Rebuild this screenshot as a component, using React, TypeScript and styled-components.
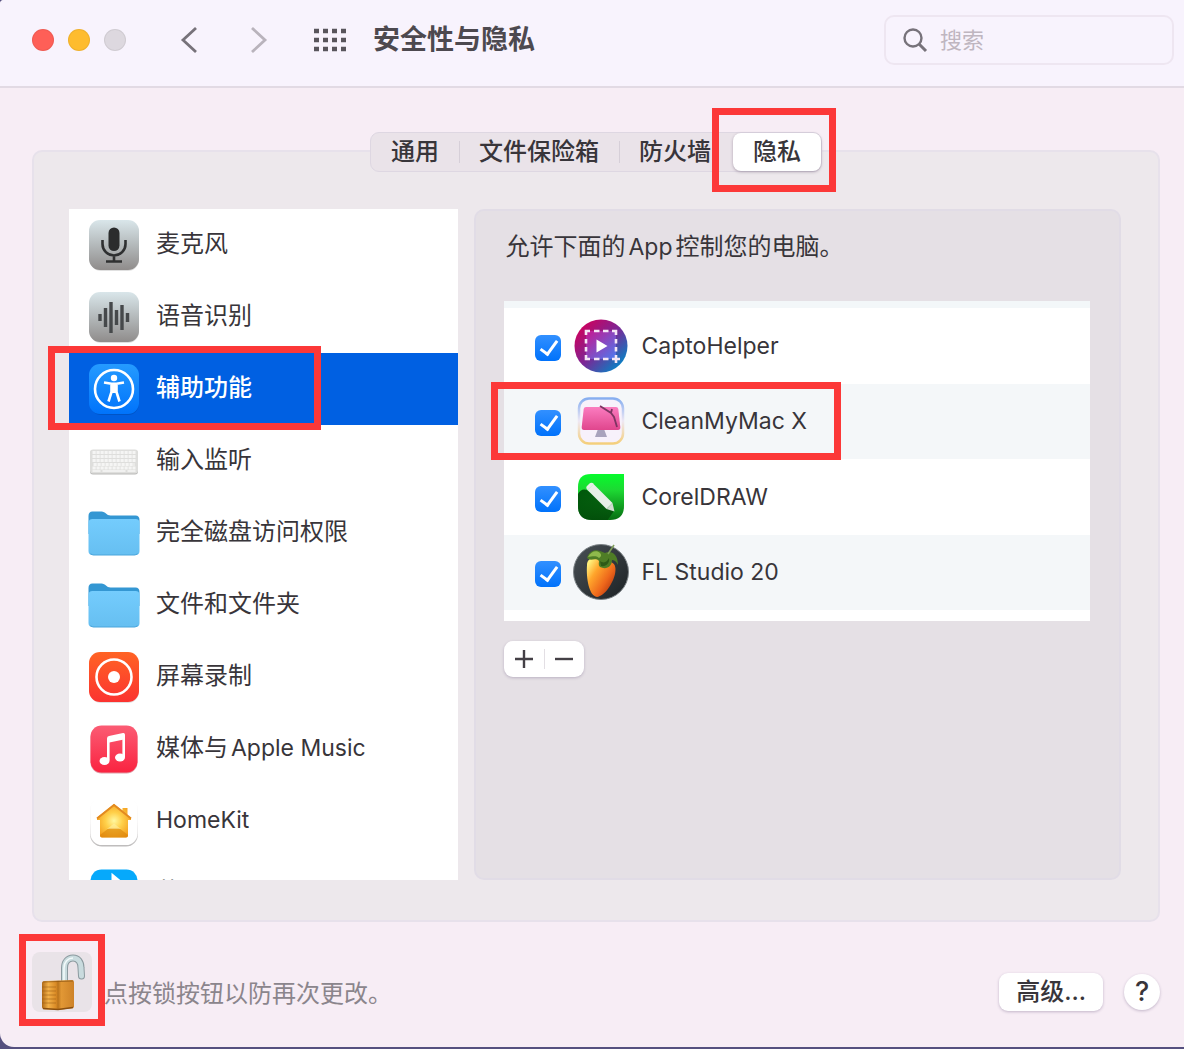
import React, { useState } from 'react';
import type { ReactNode } from 'react';
import styled, { createGlobalStyle, css } from 'styled-components';

const Global = createGlobalStyle`
  *, *::before, *::after { box-sizing: border-box; }
  html { background: #55507f; }
  body {
    margin: 0;
    color: #38353a;
    font: 24px/36px Inter, "Noto Sans CJK SC", sans-serif;
  }
  button, input { font: inherit; color: inherit; margin: 0; }
  button { border: 0; padding: 0; background: none; cursor: pointer; }
  svg { display: block; }
`;

const Window = styled.div`
  display: flex;
  flex-direction: column;
  min-height: calc(100vh - 2px);
  background: #f7edf5;
  border-radius: 4px 0 0 14px;
  overflow: hidden;
`;

const TitleBar = styled.header`
  display: flex;
  align-items: center;
  height: 88px;
  padding: 0 10px 6px 32px;
  background: #f8f3fd;
  border-bottom: 2px solid #e2dae4;
`;

const Lights = styled.div`
  display: flex;
  gap: 14px;
`;

const Light = styled.button<{ $color: string }>`
  width: 22px;
  height: 22px;
  border-radius: 50%;
  background: ${p => p.$color};
  box-shadow: inset 0 0 0 1px rgba(0, 0, 0, 0.06);
`;

const NavButtons = styled.nav`
  display: flex;
  gap: 44px;
  margin: 0 44px 0 52px;
`;

const Title = styled.h1`
  flex: 1;
  margin: 0 0 0 25px;
  font-size: 27px;
  line-height: 36px;
  font-weight: 700;
  color: #4d494f;
`;

const SearchBox = styled.label`
  display: flex;
  align-items: center;
  gap: 12px;
  width: 290px;
  height: 50px;
  padding: 0 16px;
  border: 2px solid #eee6f1;
  border-radius: 10px;
`;

const SearchInput = styled.input`
  flex: 1;
  min-width: 0;
  padding: 0;
  border: 0;
  outline: 0;
  background: none;
  font-size: 22px;
  &::placeholder { color: #bfb6c0; opacity: 1; }
`;

const Main = styled.main`
  display: flex;
  flex-direction: column;
  flex: 1;
  padding: 44px 24px 0 32px;
`;

const TabBar = styled.div`
  position: relative;
  display: flex;
  align-self: center;
  margin-bottom: -22px;
  border: 1px solid #ded7e2;
  border-radius: 9px;
  background: #eae3e9;
`;

const Tab = styled.button<{ $active: boolean }>`
  position: relative;
  height: 38px;
  padding: 0 20px;
  border-radius: 8px;
  font-weight: 500;
  & + &::before {
    content: "";
    position: absolute;
    left: 0;
    top: 8px;
    height: 22px;
    border-left: 1px solid #d6cfd8;
  }
  ${p => p.$active && css`
    background: #fff;
    box-shadow: 0 1px 3px rgba(60, 40, 70, 0.35);
    && { margin-left: 2px; }
    &&::before { display: none; }
  `}
`;

const Panel = styled.section`
  display: grid;
  grid-template-columns: 3fr 5fr;
  gap: 16px;
  padding: 57px 37px 40px 35px;
  border: 2px solid #e7e1eb;
  border-radius: 10px;
  background: #ede8ec;
`;

const Categories = styled.ul`
  height: 671px;
  margin: 0;
  padding: 0;
  list-style: none;
  background: #fff;
  overflow-y: clip;
`;

const Category = styled.li`
  position: relative;
`;

const CategoryButton = styled.button<{ $active: boolean }>`
  display: flex;
  align-items: center;
  gap: 16px;
  width: 100%;
  height: 72px;
  padding: 0 19px;
  text-align: left;
  background: ${p => (p.$active ? '#0060e2' : 'transparent')};
  color: ${p => (p.$active ? '#fff' : 'inherit')};
  font-weight: ${p => (p.$active ? 500 : 400)};
`;

const Label = styled.span`
  white-space: nowrap;
  padding-bottom: 2px;
`;

const Latin = styled.span`
  font-size: 23px;
`;

const InlineLatin = styled(Latin)`
  margin: 0 3px;
`;

const Detail = styled.div`
  padding: 18px 29px 0 28px;
  border: 2px solid #e1dce6;
  border-radius: 10px;
  background: #e5e0e5;
`;

const DetailHeading = styled.p`
  margin: 0 0 36px 2px;
`;

const Apps = styled.ul`
  display: grid;
  grid-auto-rows: 1fr;
  height: 320px;
  margin: 0;
  padding: 7px 0 11px;
  list-style: none;
  background: linear-gradient(#f3f7f9 7px, #fff 7px);
`;

const AppRow = styled.li`
  position: relative;
  &:nth-child(even) { background: #f4f7f9; }
`;

const AppLabel = styled.label`
  display: flex;
  align-items: center;
  height: 100%;
  padding-left: 31px;
  font-size: 23px;
`;

const AppIcon = styled.span`
  margin: 0 13px 0 12px;
`;

const CheckBox = styled.input`
  appearance: none;
  width: 26px;
  height: 26px;
  margin-top: 4px;
  border-radius: 6px;
  background: #d5d0d6;
  &:checked { background: linear-gradient(#3290ff, #0072fb); }
  &:checked::before {
    content: "";
    display: block;
    width: 10px;
    height: 18px;
    margin: 2px 0 0 9px;
    border: solid #fff;
    border-width: 0 3px 3px 0;
    transform: rotate(36deg);
  }
`;

const Stepper = styled.div`
  display: inline-flex;
  align-items: center;
  margin-top: 20px;
  border-radius: 9px;
  background: #fff;
  box-shadow: 0 1px 3px rgba(60, 40, 90, 0.25);
`;

const StepButton = styled.button`
  position: relative;
  display: grid;
  place-items: center;
  width: 40px;
  height: 36px;
  & + &::before {
    content: "";
    position: absolute;
    left: 0;
    top: 8px;
    height: 20px;
    border-left: 1px solid #e3dfe4;
  }
`;

const Footer = styled.footer`
  display: flex;
  align-items: center;
  gap: 12px;
  padding-top: 30px;
`;

const LockWrap = styled.div`
  position: relative;
`;

const LockButton = styled.button`
  display: block;
  width: 60px;
  height: 60px;
  border-radius: 8px;
  background: #e9e3e8;
`;

const Hint = styled.p`
  flex: 1;
  margin: 24px 0 0;
  color: #8b858c;
`;

const PushButton = styled.button`
  height: 38px;
  margin-top: 20px;
  padding: 0 17px;
  border-radius: 9px;
  background: #fff;
  box-shadow: 0 1px 3px rgba(60, 40, 90, 0.28);
  font-weight: 500;
`;

const HelpButton = styled(PushButton)`
  width: 36px;
  height: 36px;
  margin-left: 9px;
  padding: 0;
  border-radius: 50%;
  font-size: 27px;
`;

const Highlight = styled.span<{ $top: number; $left: number; $w: number; $h: number }>`
  position: absolute;
  z-index: 2;
  top: ${p => p.$top}px;
  left: ${p => p.$left}px;
  width: ${p => p.$w}px;
  height: ${p => p.$h}px;
  border: 7px solid #fc3838;
  pointer-events: none;
`;

function Tile({ id, from, to, children }: { id: string; from: string; to: string; children?: ReactNode }) {
  return (
    <svg width="52" height="52" viewBox="0 0 52 52" aria-hidden="true">
      <defs>
        <linearGradient id={id} x2="0" y2="1">
          <stop stopColor={from} />
          <stop offset="1" stopColor={to} />
        </linearGradient>
      </defs>
      <rect x="2" y="2.500" width="49" height="49.500" rx="11" fill="#000" opacity=".12" />
      <rect x="1" y="1" width="50" height="50" rx="11" fill={`url(#${id})`} />
      {children}
    </svg>
  );
}

const MicIcon = () => (
  <Tile id="mic" from="#d9e6ea" to="#8f8c8b">
    <rect x="20.500" y="8.500" width="11" height="23.500" rx="5.500" fill="#2b2c2d" />
    <path d="M14.500 21v4a11.500 11.500 0 0 0 23 0v-4M26 36.500V42M18 42.500h16" fill="none" stroke="#2f3031" strokeWidth="2.600" />
  </Tile>
);

const SpeechIcon = () => (
  <Tile id="speech" from="#d9e6ea" to="#8f8c8b">
    <path d="M12 23v7M17.500 17v19M23 11v31M28.500 19v15M34 14v25M39.500 22v9" fill="none" stroke="#46494b" strokeWidth="3.400" />
  </Tile>
);

const AccessIcon = () => (
  <Tile id="access" from="#259bff" to="#0073fb">
    <circle cx="26" cy="26" r="19" fill="none" stroke="#fff" strokeWidth="2.600" />
    <circle cx="26" cy="15" r="3.200" fill="#fff" />
    <path d="M16 19.500l7.500 1.300h5l7.500-1.300M23.500 21v8l-3 9.500M28.500 21v8l3 9.500" fill="none" stroke="#fff" strokeWidth="2.600" />
    <path d="M23 20h6v10h-6z" fill="#fff" />
  </Tile>
);

const KeyboardIcon = () => (
  <svg width="52" height="52" viewBox="0 0 52 52" aria-hidden="true">
    <rect x="2" y="15.500" width="48" height="24" rx="3" fill="#b9b9b7" />
    <rect x="2" y="14.500" width="48" height="24" rx="3" fill="#dededc" />
    <path d="M4.500 17.500h43M4.500 21.500h43M4.500 25.500h43M5.500 29.500h41M4.500 33h43" fill="none" stroke="#f5f5f4" strokeWidth="3" strokeDasharray="3.200 .8" />
    <path d="M4.500 36h8M14.500 36h23M39.500 36h8" stroke="#f1f1f0" strokeWidth="1.800" />
  </svg>
);

const FolderIcon = ({ id }: { id: string }) => (
  <svg width="52" height="52" viewBox="0 0 52 52" aria-hidden="true">
    <defs>
      <linearGradient id={id} x2="0" y2="1">
        <stop stopColor="#74ccfd" />
        <stop offset="1" stopColor="#66bff1" />
      </linearGradient>
    </defs>
    <path d="M.5 9q0-4.500 4-4.500h9c4 0 5 4 9 4h25q4 0 4 4.500v14H.500z" fill="#3497d3" />
    <rect x=".5" y="12" width="51" height="36" rx="4" fill={`url(#${id})`} />
    <path d="M2.500 46.500q1 1.500 3 1.500h41q2 0 3-1.500" fill="none" stroke="#4ba5db" strokeWidth="1.200" />
  </svg>
);

const RecordIcon = () => (
  <Tile id="record" from="#ff6324" to="#fb3330">
    <circle cx="26" cy="26" r="17.500" fill="none" stroke="#fff" strokeWidth="2.600" />
    <circle cx="26" cy="26" r="6" fill="#fff" />
  </Tile>
);

const MusicIcon = () => (
  <svg width="52" height="52" viewBox="0 0 52 52" aria-hidden="true">
    <defs>
      <linearGradient id="music" x2="0" y2="1">
        <stop stopColor="#fb5c74" />
        <stop offset="1" stopColor="#fa2340" />
      </linearGradient>
    </defs>
    <rect x="2.500" y="3.500" width="47" height="47" rx="11" fill="#c03a4c" opacity=".5" />
    <rect x="2.500" y="2.500" width="47" height="47" rx="11" fill="url(#music)" />
    <path d="M19 15.500q0-2 2-2.400l14-3q2-.3 2 1.600v4.500L19 20z" fill="#fff" />
    <path d="M20.300 16v21.500M35.700 12v22" stroke="#fff" strokeWidth="2.600" />
    <ellipse cx="16.500" cy="38" rx="5" ry="4" fill="#fff" />
    <ellipse cx="32" cy="34.500" rx="5" ry="4" fill="#fff" />
  </svg>
);

const HomeIcon = () => (
  <svg width="52" height="52" viewBox="0 0 52 52" aria-hidden="true">
    <defs>
      <radialGradient id="home" cx=".5" cy=".5" r=".62">
        <stop stopColor="#fff8a0" />
        <stop offset=".4" stopColor="#ffd04a" />
        <stop offset="1" stopColor="#f19415" />
      </radialGradient>
      <linearGradient id="home-edge" x2="0" y2="1">
        <stop stopColor="#fff" />
        <stop offset=".5" stopColor="#f0eeee" />
        <stop offset="1" stopColor="#bdbbbb" />
      </linearGradient>
    </defs>
    <rect x="2" y="3" width="48" height="48.500" rx="12" fill="url(#home-edge)" />
    <rect x="2.500" y="2" width="47" height="48" rx="11.500" fill="#fff" />
    <path d="M9 22.500L26 9l8.500 6.500v-2.500h5v7l3.500 3v2h-3v15.500q0 2-2 2H14q-2 0-2-2V25H9z" fill="url(#home)" />
    <path d="M9 23.500L26 10l17 13.500" fill="none" stroke="#e38a20" strokeWidth="2" />
    <path d="M12 40l9-7h10l9 7v.500q0 2-2 2H14q-2 0-2-2z" fill="#d88209" opacity=".6" />
    <path d="M19 34l7-5.500 7 5.500z" fill="#fff6b0" opacity=".5" />
  </svg>
);

const BlueIcon = () => (
  <svg width="52" height="52" viewBox="0 0 52 52" aria-hidden="true">
    <rect x="2.500" y="2.500" width="47" height="47" rx="11" fill="#06a9fb" />
    <path d="M16 19l20 14-11 9V9l11 9-20 14" fill="none" stroke="#fff" strokeWidth="3" />
  </svg>
);

const CaptoIcon = () => (
  <svg width="56" height="56" viewBox="0 0 56 56" aria-hidden="true">
    <defs>
      <linearGradient id="capto" x1=".1" y1=".1" x2=".9" y2=".9">
        <stop stopColor="#d1005c" />
        <stop offset=".5" stopColor="#7b2796" />
        <stop offset="1" stopColor="#0088c8" />
      </linearGradient>
      <linearGradient id="capto-in" x2="1" y2="1">
        <stop stopColor="#c9168f" />
        <stop offset="1" stopColor="#4a7af0" />
      </linearGradient>
    </defs>
    <circle cx="28" cy="28" r="26.500" fill="url(#capto)" />
    <rect x="13" y="13" width="30" height="28" fill="url(#capto-in)" />
    <path d="M13 17v-4h4M39 13h4v4M13 37v4h4M21 13h5.500M30 13h5.500M21 41h5.500M30 41h5.500M13 21v4.500M13 29v4.500M43 21v4.500M43 29v4.500M43 37v8M39 41h8" fill="none" stroke="#f5e6f6" strokeWidth="2.600" />
    <path d="M23.500 21.500L34.500 28l-11 6.500z" fill="#fff" />
  </svg>
);

const CleanIcon = () => (
  <svg width="56" height="56" viewBox="0 0 56 56" aria-hidden="true">
    <defs>
      <linearGradient id="clean-edge" x2="0" y2="1">
        <stop stopColor="#86aef0" />
        <stop offset=".5" stopColor="#eee8f4" />
        <stop offset="1" stopColor="#f4cf7c" />
      </linearGradient>
      <linearGradient id="clean" x2="0" y2="1">
        <stop stopColor="#fb7cc0" />
        <stop offset="1" stopColor="#e0468d" />
      </linearGradient>
    </defs>
    <rect x="6" y="5.500" width="44" height="45" rx="10" fill="#f7f1fb" stroke="url(#clean-edge)" strokeWidth="2.500" />
    <path d="M25 36h6l3 8H22z" fill="#a9a3bd" />
    <path d="M13 14h30q2 0 2.300 2l2 18q.2 3-2.300 3H11q-2.500 0-2.300-3l2-18q.3-2 2.300-2z" fill="url(#clean)" />
    <path d="M27 13l11 7 3 4 3 10M38 20l1-4" fill="none" stroke="#7d3462" strokeWidth="1.800" />
  </svg>
);

const CorelIcon = () => (
  <svg width="56" height="56" viewBox="0 0 56 56" aria-hidden="true">
    <defs>
      <linearGradient id="corel" x2="0" y2="1">
        <stop stopColor="#06fb2c" />
        <stop offset=".35" stopColor="#1dd933" />
        <stop offset="1" stopColor="#076d12" />
      </linearGradient>
      <linearGradient id="corel-shade" x2="1" y2="1">
        <stop stopColor="#00560a" />
        <stop offset="1" stopColor="#003c06" stopOpacity=".6" />
      </linearGradient>
      <clipPath id="corel-clip">
        <path d="M18 5h33v32q0 14-14 14H19Q5 51 5 37V18Q5 5 18 5z" />
      </clipPath>
    </defs>
    <g clipPath="url(#corel-clip)">
      <path d="M5 5h46v46H5z" fill="url(#corel)" />
      <path d="M5 25q3-6 9-4l27 21-7 10H5z" fill="url(#corel-shade)" />
    </g>
    <path d="M17.500 18L36.500 37" stroke="#e6efe6" strokeWidth="8.500" />
    <path d="M14.500 21q-2.500-2.500 0-4.500l2-2q2-1.500 4.500.500z" fill="#e6efe6" />
    <path d="M39.500 34l2 8.500-8-2.500z" fill="#cfdccf" />
  </svg>
);

const FruitIcon = () => (
  <svg width="56" height="56" viewBox="0 0 56 56" aria-hidden="true">
    <defs>
      <linearGradient id="fruit-bg" x1="0" y1="0" x2="1" y2="1">
        <stop stopColor="#495156" />
        <stop offset="1" stopColor="#1c2124" />
      </linearGradient>
      <linearGradient id="fruit" x1=".1" y1=".1" x2=".9" y2=".8">
        <stop stopColor="#fff07a" />
        <stop offset=".3" stopColor="#ffa62c" />
        <stop offset=".7" stopColor="#ee671b" />
        <stop offset="1" stopColor="#b93a10" />
      </linearGradient>
    </defs>
    <circle cx="28" cy="28" r="27.500" fill="url(#fruit-bg)" stroke="#7b8286" strokeWidth="1" />
    <path d="M14 21c0-6 5-8 11-7l13 4c5 2 5 7 4 12-2 9-10 22-18 23-8-1-11-19-10-32z" fill="url(#fruit)" />
    <path d="M14 14c2-7 8-9 13-7l5 2c6-3 13 1 13 12-2-4-4-5-6-5 0 7-6 10-12 7-2-2-1-4-1-6-4-4-8 1-12-3z" fill="#4f7d26" />
    <path d="M15 13c3-6 9-7 12-4 2 2 1 4-1 5-4-3-7-1-11-1z" fill="#8fb94c" />
    <path d="M27 17c4 3 7 1 9-3 1 5-3 9-8 8z" fill="#2f5a17" />
    <path d="M35 10l6-9" stroke="#7e9d5a" strokeWidth="1.600" />
  </svg>
);

const PadlockIcon = () => (
  <svg width="60" height="60" viewBox="0 0 60 60" aria-hidden="true">
    <defs>
      <linearGradient id="lock" x2="1" y2="0">
        <stop stopColor="#b06a17" />
        <stop offset=".2" stopColor="#f3b149" />
        <stop offset=".44" stopColor="#d98a25" />
        <stop offset=".5" stopColor="#b8721b" />
        <stop offset=".6" stopColor="#e29835" />
        <stop offset="1" stopColor="#cd8228" />
      </linearGradient>
    </defs>
    <path d="M32.500 30V16c0-6 3.500-10 8.500-10s8 4 8 10l.5 8" fill="none" stroke="#8b9a9f" strokeWidth="7" strokeLinecap="round" />
    <path d="M32.500 30V16c0-6 3.500-10 8.500-10s8 4 8 10l.5 8" fill="none" stroke="#c9dbde" strokeWidth="5" strokeLinecap="round" />
    <path d="M32 30V16c0-6 4-10 9-10" fill="none" stroke="#f2fafa" strokeWidth="1.600" />
    <path d="M10 31q0-2 3-2l27-1q2 0 2 2v25q0 1-2 1.300L26 58l-14-.7q-2-.3-2-2z" fill="url(#lock)" />
    <path d="M10 35h14M10 39h14M10 43h14M10 47h14M10 51h14" stroke="#9b5c14" strokeWidth="1" opacity=".55" />
    <path d="M11 30l30-1" stroke="#8a5412" strokeWidth="1.200" opacity=".7" />
    <path d="M11 56.500l15 1 15-2" fill="none" stroke="#8a4f10" strokeWidth="1.500" />
  </svg>
);

const CATEGORIES: { name: ReactNode; key: string; icon: ReactNode }[] = [
  { key: 'mic', name: '麦克风', icon: <MicIcon /> },
  { key: 'speech', name: '语音识别', icon: <SpeechIcon /> },
  { key: 'access', name: '辅助功能', icon: <AccessIcon /> },
  { key: 'input', name: '输入监听', icon: <KeyboardIcon /> },
  { key: 'disk', name: '完全磁盘访问权限', icon: <FolderIcon id="folder-a" /> },
  { key: 'files', name: '文件和文件夹', icon: <FolderIcon id="folder-b" /> },
  { key: 'screen', name: '屏幕录制', icon: <RecordIcon /> },
  { key: 'media', name: <>媒体与<InlineLatin>Apple Music</InlineLatin></>, icon: <MusicIcon /> },
  { key: 'homekit', name: <Latin>HomeKit</Latin>, icon: <HomeIcon /> },
  { key: 'bluetooth', name: '蓝牙', icon: <BlueIcon /> },
];

const APPS = [
  { name: 'CaptoHelper', icon: <CaptoIcon /> },
  { name: 'CleanMyMac X', icon: <CleanIcon />, marked: true },
  { name: 'CorelDRAW', icon: <CorelIcon /> },
  { name: 'FL Studio 20', icon: <FruitIcon /> },
];

const TABS = ['通用', '文件保险箱', '防火墙', '隐私'];

export default function App() {
  const [tab, setTab] = useState('隐私');
  const [category, setCategory] = useState('access');

  return (
    <>
      <Global />
      <Window>
        <TitleBar>
          <Lights>
            <Light $color="#fe5f57" aria-label="关闭" />
            <Light $color="#febc2e" aria-label="最小化" />
            <Light $color="#ddd8df" aria-label="缩放" />
          </Lights>
          <NavButtons>
            <button aria-label="后退">
              <svg width="24" height="28" viewBox="0 0 24 28" fill="none" stroke="#77727a" strokeWidth="2.800">
                <path d="M18 2L5 14l13 12" />
              </svg>
            </button>
            <button aria-label="前进">
              <svg width="24" height="28" viewBox="0 0 24 28" fill="none" stroke="#b9b3bc" strokeWidth="2.800">
                <path d="M6 2l13 12L6 26" />
              </svg>
            </button>
          </NavButtons>
          <button aria-label="显示全部">
            <svg width="34" height="24" viewBox="0 0 34 24" stroke="#59555c" strokeWidth="4.600" strokeDasharray="5 4">
              <path d="M0 3h33M0 12h33M0 21h33" />
            </svg>
          </button>
          <Title>安全性与隐私</Title>
          <SearchBox>
            <svg width="26" height="26" viewBox="0 0 26 26" fill="none" stroke="#77727a" aria-hidden="true">
              <circle cx="11" cy="11" r="8.500" strokeWidth="2.400" />
              <path d="M17 17l7 7" strokeWidth="3" />
            </svg>
            <SearchInput type="search" placeholder="搜索" aria-label="搜索" />
          </SearchBox>
        </TitleBar>

        <Main>
          <TabBar role="tablist">
            {TABS.map(name => (
              <Tab key={name} role="tab" aria-selected={tab === name} $active={tab === name} onClick={() => setTab(name)}>
                {name}
                {name === '隐私' && <Highlight $top={-25} $left={-21} $w={124} $h={84} />}
              </Tab>
            ))}
          </TabBar>

          <Panel>
            <Categories>
              {CATEGORIES.map(item => (
                <Category key={item.key}>
                  <CategoryButton $active={category === item.key} onClick={() => setCategory(item.key)}>
                    {item.icon}
                    <Label>{item.name}</Label>
                  </CategoryButton>
                  {item.key === 'access' && <Highlight $top={-7} $left={-21} $w={273} $h={84} />}
                </Category>
              ))}
            </Categories>

            <Detail>
              <DetailHeading>
                允许下面的<InlineLatin>App</InlineLatin>控制您的电脑。
              </DetailHeading>
              <Apps>
                {APPS.map(app => (
                  <AppRow key={app.name}>
                    <AppLabel>
                      <CheckBox type="checkbox" defaultChecked />
                      <AppIcon>{app.icon}</AppIcon>
                      {app.name}
                    </AppLabel>
                    {app.marked && <Highlight $top={-2} $left={-13} $w={350} $h={78} />}
                  </AppRow>
                ))}
              </Apps>
              <Stepper>
                <StepButton aria-label="添加">
                  <svg width="20" height="20" viewBox="0 0 20 20" stroke="#444046" strokeWidth="2.400">
                    <path d="M1 10h18M10 1v18" />
                  </svg>
                </StepButton>
                <StepButton aria-label="移除">
                  <svg width="20" height="20" viewBox="0 0 20 20" stroke="#444046" strokeWidth="2.400">
                    <path d="M1 10h18" />
                  </svg>
                </StepButton>
              </Stepper>
            </Detail>
          </Panel>

          <Footer>
            <LockWrap>
              <LockButton aria-label="锁定">
                <PadlockIcon />
              </LockButton>
              <Highlight $top={-18} $left={-13} $w={86} $h={92} />
            </LockWrap>
            <Hint>点按锁按钮以防再次更改。</Hint>
            <PushButton>高级...</PushButton>
            <HelpButton aria-label="帮助">?</HelpButton>
          </Footer>
        </Main>
      </Window>
    </>
  );
}
